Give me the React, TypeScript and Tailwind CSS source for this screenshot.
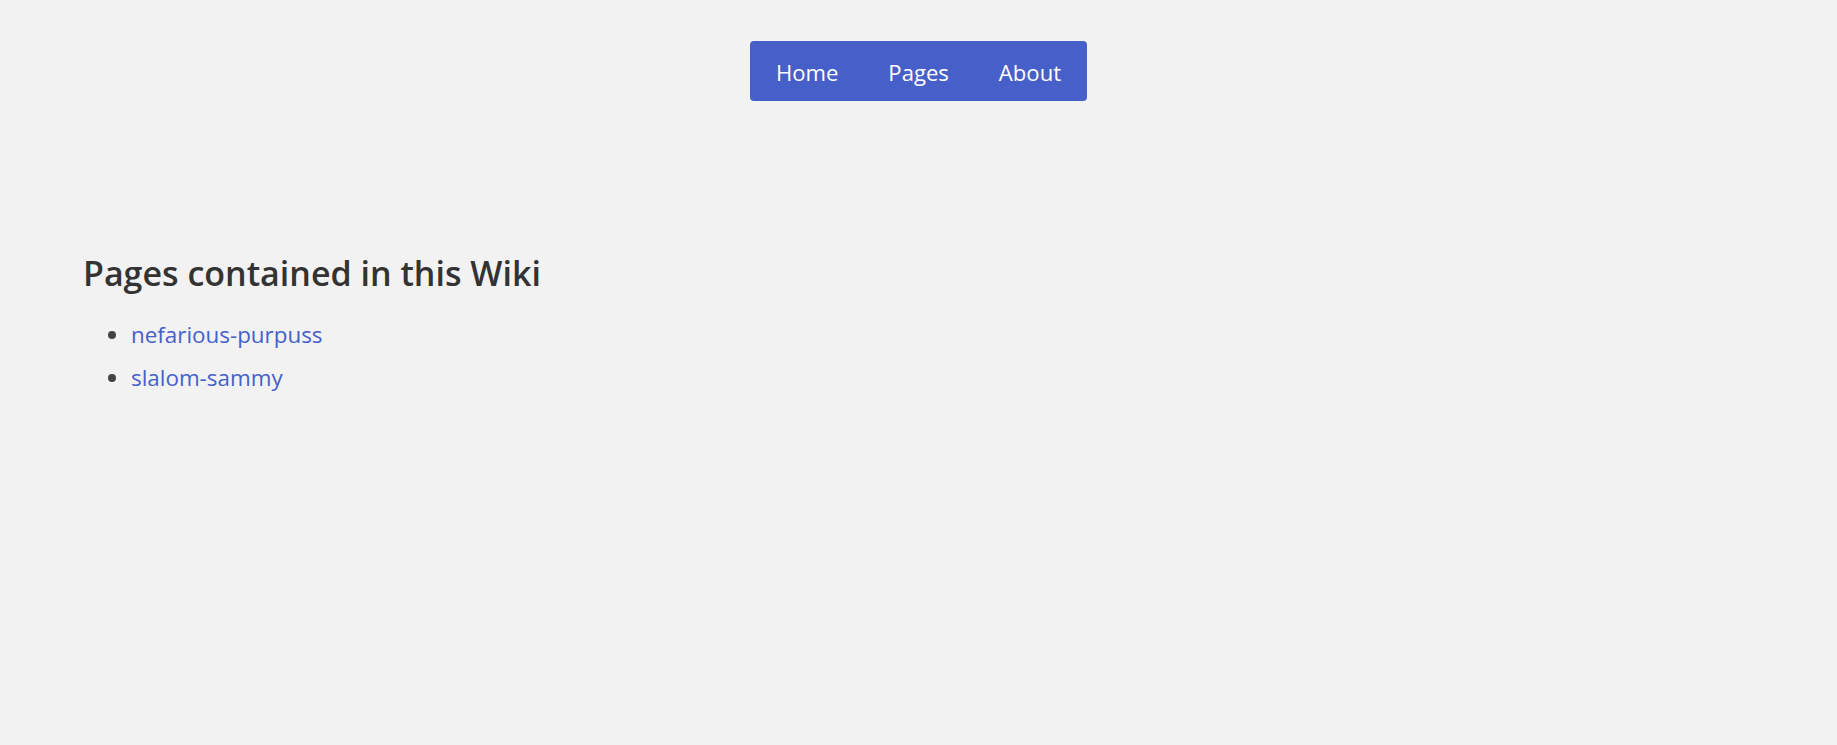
// App.tsx — wiki pages index
const navLinks = ['Home', 'Pages', 'About'];
const pages = ['nefarious-purpuss', 'slalom-sammy'];

export default function App() {
  return (
    <div className="min-h-screen w-full bg-[#f2f2f2] font-['Open_Sans',sans-serif] text-[#333333]">
      {/* top nav */}
      <div className="flex justify-center pt-[41px]">
        <nav className="flex h-[60px] items-center rounded-[4px] bg-[#4760c9] px-[1px]">
          {navLinks.map((l) => (
            <a key={l} href="#" className="mt-[2px] px-[25px] text-[22.1px] leading-none text-white">
              {l}
            </a>
          ))}
        </nav>
      </div>

      {/* content */}
      <main className="px-[83px] pt-[150px]">
        <h1 className="text-[34px] font-semibold leading-[44px]">Pages contained in this Wiki</h1>
        <ul className="mt-[18px] list-disc pl-[48px] text-[22.4px] marker:text-[#444]">
          {pages.map((p) => (
            <li key={p} className="leading-[43px]">
              <a href="#" className="text-[#4760c9]">
                {p}
              </a>
            </li>
          ))}
        </ul>
      </main>
    </div>
  );
}
